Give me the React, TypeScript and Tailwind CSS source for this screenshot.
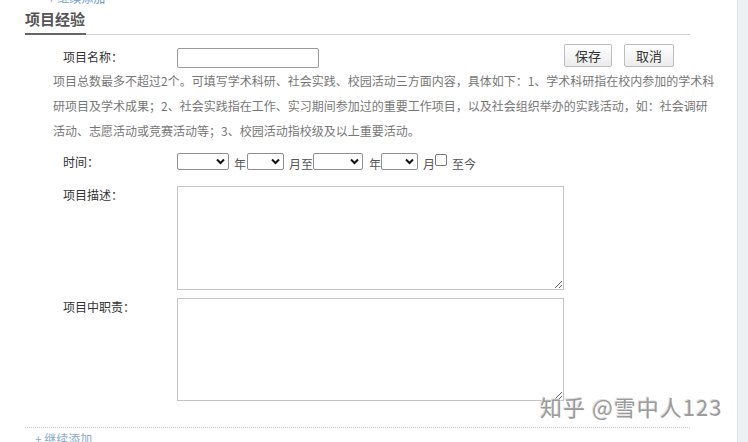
import React from "react";

const font = { fontFamily: '"Noto Sans CJK SC", "Noto Sans", sans-serif' };

function Sel({ w }: { w: string }) {
  return (
    <span className={`relative inline-flex h-[17px] ${w}`}>
      <select className="h-full w-full appearance-none rounded-[2px] border border-[#8f8f8f] bg-white outline-none" />
      <svg className="pointer-events-none absolute right-[4px] top-[5px]" width="9" height="7" viewBox="0 0 9 7">
        <path d="M1 1.5 L4.5 5 L8 1.5" fill="none" stroke="#111" strokeWidth="2" />
      </svg>
    </span>
  );
}

export default function App() {
  return (
    <div className="flex h-[442px] w-[748px] overflow-hidden bg-white text-[12px] text-[#333]" style={font}>
      <div className="relative flex-1">
        {/* cut-off link at top */}
        <div className="h-[5px] overflow-hidden pl-[48px]">
          <div className="-mt-[9px] text-[12px] leading-[14px] text-[#6c9bd2]">+ 继续添加</div>
        </div>

        {/* heading */}
        <div className="ml-[25px] mr-[47px] flex border-b border-[#d4d4d4]">
          <div className="-mb-px border-b-2 border-[#666] pr-[1px] text-[15px] font-bold leading-[28px] text-[#555]">
            项目经验
          </div>
        </div>

        {/* name row */}
        <div className="mt-[9px] flex items-start pl-[63px]">
          <div className="w-[114px] pt-[4px] leading-[18px]">项目名称：</div>
          <input className="mt-[4px] h-[20px] w-[142px] rounded-[2px] border border-[#999] bg-white outline-none" />
          <div className="ml-[245px] flex gap-[12px]">
            <button className="h-[23px] w-[48px] rounded-[2px] border border-[#bdbdbd] bg-gradient-to-b from-white to-[#ececec] text-[13px] leading-[21px] text-[#333]">
              保存
            </button>
            <button className="h-[23px] w-[50px] rounded-[2px] border border-[#bdbdbd] bg-gradient-to-b from-white to-[#ececec] text-[13px] leading-[21px] text-[#333]">
              取消
            </button>
          </div>
        </div>

        {/* description */}
        <div className="whitespace-nowrap pl-[53px] text-[12px] leading-[25px] text-[#777]">
          <div>项目总数最多不超过2个。可填写学术科研、社会实践、校园活动三方面内容，具体如下：1、学术科研指在校内参加的学术科</div>
          <div>研项目及学术成果；2、社会实践指在工作、实习期间参加过的重要工作项目，以及社会组织举办的实践活动，如：社会调研</div>
          <div>活动、志愿活动或竞赛活动等；3、校园活动指校级及以上重要活动。</div>
        </div>

        {/* time row */}
        <div className="mt-[10px] flex h-[17px] items-center pl-[63px]">
          <div className="w-[114px] leading-[17px]">时间：</div>
          <div className="flex items-center text-[12px] text-[#555]">
            <Sel w="w-[52px]" />
            <span className="ml-[5px] mr-[1px] mt-[4px]">年</span>
            <Sel w="w-[37px]" />
            <span className="ml-[5px] mt-[4px]">月至</span>
            <Sel w="w-[50px]" />
            <span className="ml-[6px] mt-[4px]">年</span>
            <Sel w="w-[37px]" />
            <span className="ml-[5px] mt-[4px]">月</span>
            <input type="checkbox" className="-mt-[3px] h-[12px] w-[12px] appearance-none rounded-[2px] border border-[#777] bg-white" />
            <span className="ml-[5px] mt-[4px]">至今</span>
          </div>
        </div>

        {/* project description */}
        <div className="mt-[16px] flex items-start pl-[63px]">
          <div className="w-[114px] leading-[18px]">项目描述：</div>
          <textarea className="h-[104px] w-[387px] border border-[#c4c4c4] bg-white outline-none" />
        </div>

        {/* responsibilities */}
        <div className="mt-[8px] flex items-start pl-[63px]">
          <div className="w-[114px] leading-[18px]">项目中职责：</div>
          <textarea className="h-[103px] w-[387px] border border-[#c4c4c4] bg-white outline-none" />
        </div>

        {/* dotted separator */}
        <div className="ml-[25px] mr-[47px] mt-[26px] border-t border-dotted border-[#c8c8c8]" />

        <div className="pl-[35px] pt-[4px] text-[12px] leading-[14px] text-[#8aa9cc]">+ 继续添加</div>

        {/* watermark */}
        <div
          className="absolute left-[540px] top-[392px] whitespace-nowrap text-[22px] leading-[28px] tracking-[1px] text-[#9a9a9a]"
          style={{ textShadow: "1px 1px 0 #fff, -1px -1px 0 #e0e0e0" }}
        >
          知乎 @雪中人123
        </div>
      </div>
      <div className="w-[11px] border-l border-[#dde2e7] bg-[#eef1f4]" />
    </div>
  );
}
